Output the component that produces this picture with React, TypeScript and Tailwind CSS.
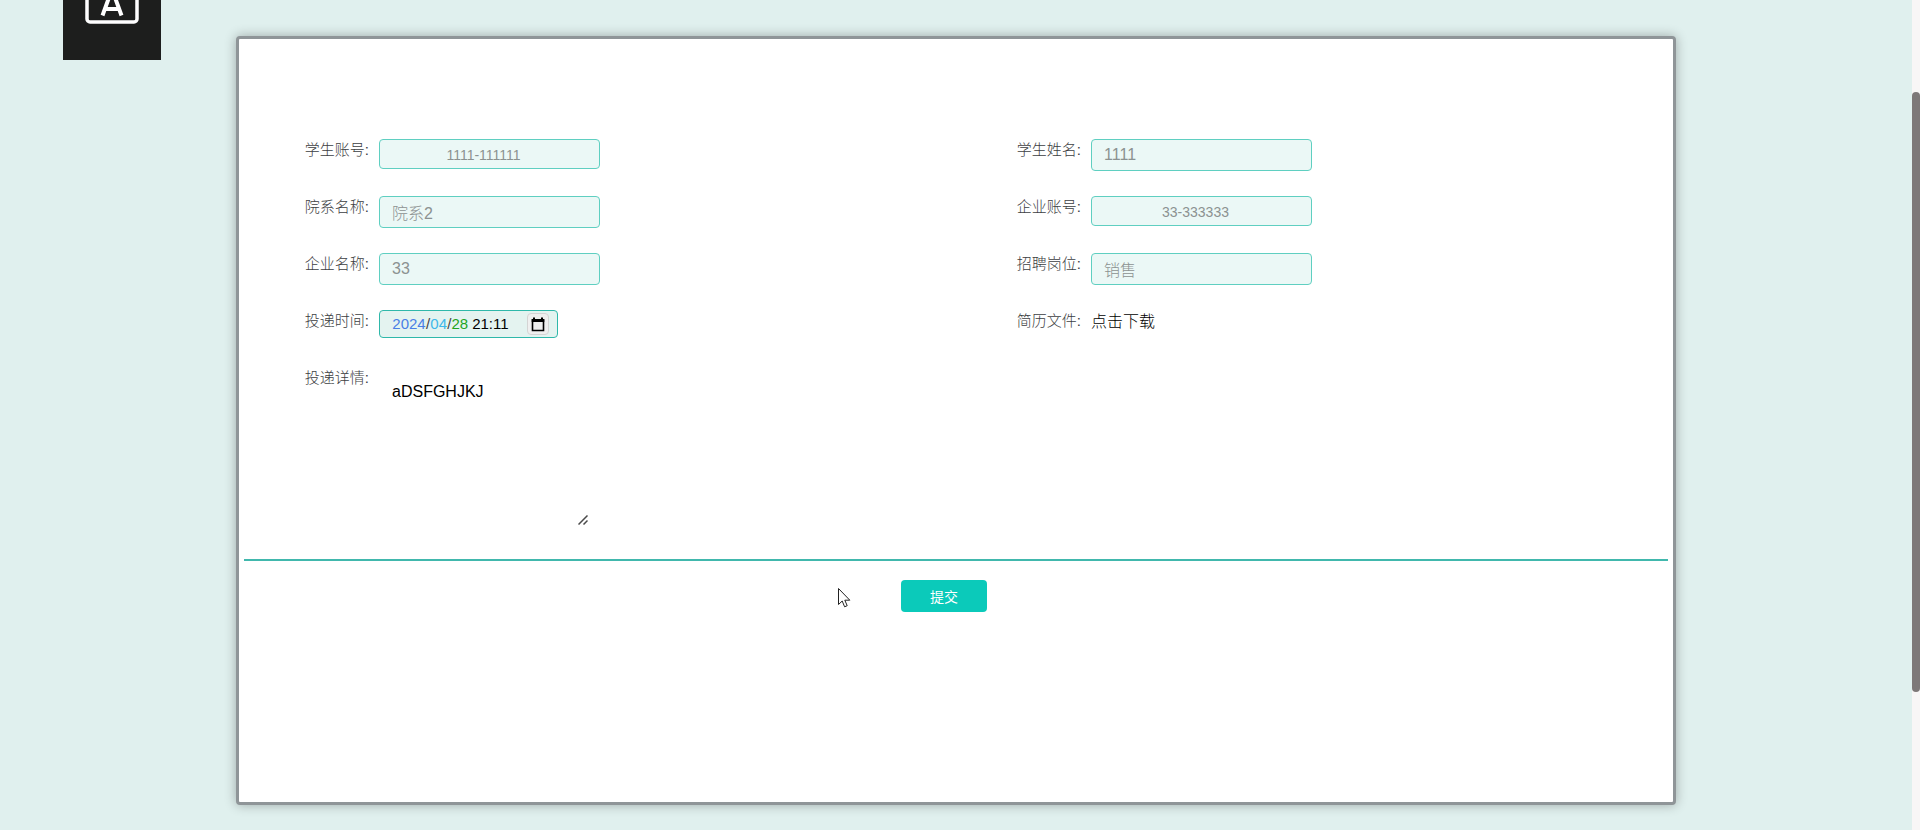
import { useState } from 'react';
import type { ReactNode } from 'react';

const boxed =
    'block w-[221px] rounded border border-[#5fcfc1] bg-[#ebf8f6] text-[#8b9291] opacity-100 focus:outline-none';

function Field({ id, label, children }: { id: string; label: string; children: ReactNode }) {
    return (
        <div className="flex h-[57px] items-start">
            <label
                htmlFor={id}
                className="w-[135px] shrink-0 pr-[10px] text-right text-[15px] leading-[22px] font-light text-[#3c3e42]"
            >
                {label}:
            </label>
            {children}
        </div>
    );
}

function TextField({ id, label, value }: { id: string; label: string; value: string }) {
    return (
        <Field id={id} label={label}>
            <input id={id} type="text" disabled defaultValue={value} className={`${boxed} h-8 px-3 pb-px text-base font-light`} />
        </Field>
    );
}

function AccountField({ id, label, value }: { id: string; label: string; value: string }) {
    return (
        <Field id={id} label={label}>
            <select id={id} disabled defaultValue={value} className={`${boxed} h-[30px] appearance-none pt-0.5 pr-3 text-center text-sm`}>
                <option value={value}>{value}</option>
            </select>
        </Field>
    );
}

function DateTimeField() {
    const part = 'p-0 text-center text-[15px] focus:outline-none';

    return (
        <Field id="send-year" label="投递时间">
            <div
                role="group"
                aria-label="投递时间"
                className="flex h-7 w-[179px] items-center rounded border border-[#2fb8aa] bg-[#e4f3f0] pr-2 pl-3 text-[15px] text-[#444]"
            >
                <input id="send-year" aria-label="年" defaultValue="2024" className={`${part} w-[34px] text-[#4a7fe6]`} />
                <span>/</span>
                <input aria-label="月" defaultValue="04" className={`${part} w-[17px] text-[#3fb8ea]`} />
                <span>/</span>
                <input aria-label="日" defaultValue="28" className={`${part} w-[17px] text-[#1fa51f]`} />
                <input aria-label="时间" defaultValue="21:11" className={`${part} ml-[3px] w-[38px] text-black`} />
                <button
                    type="button"
                    aria-label="选择日期"
                    className="ml-auto flex h-[22px] w-[22px] items-center justify-center rounded border border-[#d4d4d4] bg-[#efefef]"
                >
                    <svg width="14" height="15" viewBox="0 0 14 15" fill="none">
                        <path d="M1.500 3h11v10.500h-11z" stroke="#000" strokeWidth="1.6" />
                        <path d="M.7 2h12.600v3H.7zM2 .5h2v3H2zM10 .5h2v3h-2z" fill="#000" />
                    </svg>
                </button>
            </div>
        </Field>
    );
}

export default function App() {
    const [detail, setDetail] = useState('aDSFGHJKJ');

    return (
        <div className="relative min-h-screen overflow-hidden bg-[#e0f0ee] pt-9 pr-2 pb-6 font-['Liberation_Sans','Noto_Sans_CJK_SC',sans-serif]">
            {/* input method badge */}
            <div className="absolute top-0 left-[63px] h-[60px] w-[98px] overflow-hidden bg-[#1d1e1d]">
                <svg width="98" height="60" viewBox="0 0 98 60" fill="none" stroke="#fff">
                    <rect x="24" y="-24" width="50" height="46" rx="3" strokeWidth="3.5" />
                    <path d="M39.500 15.500 48-8h2l8.500 23.500M43 9h12" strokeWidth="4" />
                </svg>
            </div>

            <main className="mx-auto min-h-[769px] max-w-[1440px] rounded border-[3px] border-[#8f9598] bg-white px-[5px] pt-[100px] shadow-[0_0_12px_rgba(0,0,0,0.3)]">
                <form onSubmit={(e) => e.preventDefault()}>
                    <div className="grid grid-cols-2">
                        <AccountField id="student-account" label="学生账号" value="1111-111111" />
                        <TextField id="student-name" label="学生姓名" value="1111" />
                        <TextField id="department" label="院系名称" value="院系2" />
                        <AccountField id="company-account" label="企业账号" value="33-333333" />
                        <TextField id="company-name" label="企业名称" value="33" />
                        <TextField id="job" label="招聘岗位" value="销售" />
                        <DateTimeField />
                        <Field id="resume" label="简历文件">
                            <a id="resume" href="#" className="text-base leading-6 font-light text-black">
                                点击下载
                            </a>
                        </Field>
                    </div>
                    <Field id="detail" label="投递详情">
                        <div className="relative">
                            <textarea
                                id="detail"
                                value={detail}
                                onChange={(e) => setDetail(e.target.value)}
                                className="block h-[160px] w-[211px] resize-none py-[13px] pr-3 pl-[13px] text-base text-black focus:outline-none"
                            />
                            <svg
                                className="pointer-events-none absolute right-0.5 bottom-0.5"
                                width="10"
                                height="10"
                                viewBox="0 0 10 10"
                                stroke="#4a4a4a"
                                strokeWidth="1.5"
                                aria-hidden="true"
                            >
                                <path d="M.5 9.500l9-9M5.500 9.500l4-4" />
                            </svg>
                        </div>
                    </Field>
                    <div className="mt-[135px] flex justify-center border-t-2 border-[#41b8ad] pt-[19px] pr-6">
                        <button type="submit" className="h-8 w-[86px] rounded bg-[#0bcaba] pt-px text-sm text-white">
                            提交
                        </button>
                    </div>
                </form>
            </main>

            {/* mouse pointer */}
            <svg className="absolute top-[588px] left-[838px]" width="13" height="20" viewBox="0 0 13 20" aria-hidden="true">
                <path d="M.5.5v16l3.700-3.500 2.400 5.800 2.600-1.100-2.400-5.500h5z" fill="#fff" stroke="#222" />
            </svg>

            {/* scroll track */}
            <div className="absolute inset-y-0 right-0 w-2 bg-[#f8f6f6] pt-[92px]" aria-hidden="true">
                <div className="h-[600px] rounded-full bg-[#7d7878]" />
            </div>
        </div>
    );
}
